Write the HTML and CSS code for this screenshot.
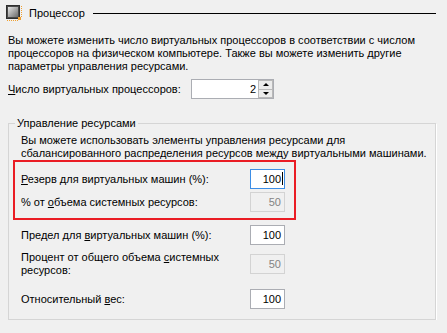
FILE: index.html
```html
<!DOCTYPE html>
<html lang="ru">
<head>
<meta charset="utf-8">
<title>Процессор</title>
<link rel="stylesheet" href="styles.css">
</head>
<body>
<div class="page">
  <div class="header">
    <svg class="chip" width="16" height="16" viewBox="0 0 16 16">
      <defs>
        <linearGradient id="g" x1="0" y1="0" x2="1" y2="1">
          <stop offset="0" stop-color="#e6e6e6"/>
          <stop offset="1" stop-color="#6a6a6a"/>
        </linearGradient>
      </defs>
      <g fill="#f0a030">
        <rect x="1" y="15" width="1" height="1"/><rect x="3" y="15" width="1" height="1"/><rect x="5" y="15" width="1" height="1"/><rect x="7" y="15" width="1" height="1"/><rect x="9" y="15" width="1" height="1"/><rect x="11" y="15" width="1" height="1"/>
        <rect x="15" y="1" width="1" height="1"/><rect x="15" y="3" width="1" height="1"/><rect x="15" y="5" width="1" height="1"/><rect x="15" y="7" width="1" height="1"/><rect x="15" y="9" width="1" height="1"/><rect x="15" y="11" width="1" height="1"/>
      </g>
      <rect x="0.5" y="0.5" width="13" height="13" fill="#4a4a4a" stroke="#2e2e2e"/>
      <rect x="2" y="2" width="10" height="10" fill="url(#g)"/>
      <rect x="12" y="12" width="3" height="3" fill="#f0a030"/>
    </svg>
    <span class="title">Процессор</span>
    <span class="rule"></span>
  </div>

  <p class="intro">Вы можете изменить число виртуальных процессоров в соответствии с числом<br>процессоров на физическом компьютере. Также вы можете изменить другие<br>параметры управления ресурсами.</p>

  <div class="cpu-row">
    <span class="cpu-label"><u>Ч</u>исло виртуальных процессоров:</span>
    <div class="spin">
      <span class="spin-value">2</span>
      <div class="spin-btns">
        <span class="spin-btn up"></span>
        <span class="spin-btn down"></span>
      </div>
    </div>
  </div>

  <div class="group">
    <span class="legend">Управление ресурсами</span>
    <p class="group-text">Вы можете использовать элементы управления ресурсами для<br>сбалансированного распределения ресурсов между виртуальными машинами.</p>

    <div class="highlight">
      <div class="field-row">
        <span class="field-label"><u>Р</u>езерв для виртуальных машин (%):</span>
        <span class="num focused">100<span class="caret"></span></span>
      </div>
      <div class="field-row">
        <span class="field-label">% от <u>о</u>бъема системных ресурсов:</span>
        <span class="num disabled">50</span>
      </div>
    </div>

    <div class="field-row outer limit">
      <span class="field-label">Предел для <u>в</u>иртуальных машин (%):</span>
      <span class="num">100</span>
    </div>
    <div class="field-row outer percent">
      <span class="field-label">Процент от общего объема <u>с</u>истемных<br>ресурсов:</span>
      <span class="num disabled">50</span>
    </div>
    <div class="field-row outer weight">
      <span class="field-label">Относительный <u>в</u>ес:</span>
      <span class="num">100</span>
    </div>
  </div>
</div>
</body>
</html>
```

FILE: styles.css
```css
html, body {
  margin: 0;
  background: #f0f0f0;
}

body {
  font-family: "Liberation Sans", Arial, sans-serif;
  font-size: 11px;
  line-height: 13px;
  color: #000;
}

u {
  text-decoration: underline;
  text-underline-offset: 1px;
}

.page {
  width: 428px;
  padding: 0 11px 0 8px;
}

.header {
  display: flex;
  align-items: center;
  height: 26px;
  margin-left: -2px;
}

.chip {
  flex: none;
  display: block;
}

.title {
  margin-left: 7px;
  white-space: nowrap;
}

.rule {
  flex: 1;
  height: 1px;
  background: #000;
  margin-left: 8px;
}

.intro {
  margin: 8px 0 0;
  white-space: nowrap;
}

.cpu-row {
  display: flex;
  align-items: center;
  height: 20px;
  margin-top: 6px;
}

.cpu-label {
  width: 183px;
  white-space: nowrap;
}

.spin {
  width: 83px;
  height: 20px;
  box-sizing: border-box;
  border: 1px solid #abadb3;
  background: #fff;
  display: flex;
}

.spin-value {
  flex: 1;
  text-align: right;
  padding-right: 2px;
  line-height: 18px;
}

.spin-btns {
  width: 15px;
  display: flex;
  flex-direction: column;
}

.spin-btn {
  flex: 1;
  box-sizing: border-box;
  border: 1px solid #b9b9b9;
  background: #ececec;
  display: flex;
  align-items: center;
  justify-content: center;
}

.spin-btn.down {
  border-top: none;
}

.spin-btn::before {
  content: "";
  width: 0;
  height: 0;
  border-left: 3px solid transparent;
  border-right: 3px solid transparent;
}

.spin-btn.up::before {
  border-bottom: 3px solid #000;
}

.spin-btn.down::before {
  border-top: 3px solid #000;
}

.group {
  position: relative;
  margin-top: 24px;
  border: 1px solid #d5d5d5;
  box-shadow: 1px 1px 0 #fff;
  padding: 10px 0 10px 0;
}

.legend {
  position: absolute;
  top: -7px;
  left: 6px;
  padding: 0 2px;
  background: #f0f0f0;
  white-space: nowrap;
}

.group-text {
  margin: 0 0 0 12px;
  white-space: nowrap;
}

.highlight {
  margin-left: 4px;
  width: 283px;
  box-sizing: border-box;
  border: 2px solid #ea1c24;
  padding: 7px 0 6px 6px;
}

.field-row {
  display: flex;
  align-items: center;
  height: 20px;
}

.highlight .field-row + .field-row {
  margin-top: 3px;
}

.field-label {
  width: 229px;
  white-space: nowrap;
}

.num {
  width: 35px;
  height: 20px;
  box-sizing: border-box;
  border: 1px solid #abadb3;
  background: #fff;
  text-align: right;
  padding-right: 3px;
  line-height: 18px;
  flex: none;
}

.num.focused {
  border-color: #3d8ee6;
  padding-right: 1px;
}

.caret {
  display: inline-block;
  width: 1px;
  height: 13px;
  background: #000;
  vertical-align: -2px;
  margin-left: 1px;
}

.num.disabled {
  background: #f0f0f0;
  border-color: #d3d3d3;
  color: #838383;
}

.outer {
  margin-left: 12px;
}

.limit {
  margin-top: 5px;
}

.percent {
  height: auto;
  align-items: flex-start;
  margin-top: 6px;
}

.percent .num {
  margin-top: 3px;
}

.weight {
  margin-top: 12px;
}
```
